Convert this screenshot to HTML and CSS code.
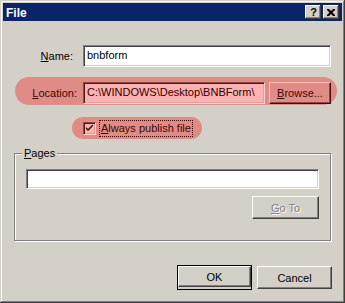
FILE: index.html
```html
<!DOCTYPE html>
<html>
<head>
<meta charset="utf-8">
<title>File</title>
<link rel="stylesheet" href="styles.css">
</head>
<body>
<div class="window">
	<div class="titlebar">
		<span class="title">File</span>
		<div class="caption-btns">
			<div class="cap-btn help">?</div>
			<div class="cap-btn close">
				<svg width="8" height="7" viewBox="0 0 8 7"><path d="M0 0h2l2 2 2-2h2v1l-2.5 2.5 2.5 2.5v1h-2l-2-2-2 2h-2v-1l2.5-2.5-2.5-2.5z" fill="#000"/></svg>
			</div>
		</div>
	</div>

	<div class="content">
		<div class="row name-row">
			<label class="lbl name-lbl"><u>N</u>ame:</label>
			<div class="textbox name-box">bnbform</div>
		</div>

		<div class="row loc-row">
			<label class="lbl loc-lbl"><u>L</u>ocation:</label>
			<div class="textbox loc-box">C:\WINDOWS\Desktop\BNBForm\</div>
			<div class="btn browse"><u>B</u>rowse...</div>
		</div>

		<div class="check-row">
			<div class="checkbox">
				<svg width="7" height="7" viewBox="0 0 7 7"><path d="M0 2l2 2 5-5v2l-5 5-2-2z" fill="#400000"/></svg>
			</div>
			<span class="check-lbl"><u>A</u>lways publish file</span>
		</div>

		<div class="group">
			<span class="legend"><u>P</u>ages</span>
			<div class="textbox pages-box"></div>
			<div class="group-foot">
				<div class="btn disabled goto"><u>G</u>o To</div>
			</div>
		</div>

		<div class="footer">
			<div class="default"><div class="btn ok">OK</div></div>
			<div class="btn cancel">Cancel</div>
		</div>
	</div>
</div>
</body>
</html>
```

FILE: styles.css
```css
body{
	margin: 0;
	background: #d4d0c8;
	font-family: "Liberation Sans", Arial, sans-serif;
	font-size: 11px;
	color: #000;
}
u{text-decoration: underline; text-underline-offset: 1px;}

.window{
	width: 345px;
	height: 303px;
	box-sizing: border-box;
	padding: 3px;
	background: #d4d0c8;
	box-shadow: inset -1px -1px #404040, inset 1px 1px #d4d0c8, inset -2px -2px #808080, inset 2px 2px #fff;
	display: flex;
	flex-direction: column;
}

/* title bar */
.titlebar{
	height: 18px;
	background: #0a246a;
	display: flex;
	align-items: center;
	justify-content: space-between;
	padding: 0 3px 0 3px;
}
.title{
	color: #fff;
	font-weight: bold;
	font-size: 12px;
	padding-top: 1px;
}
.caption-btns{display: flex; gap: 2px;}
.cap-btn{
	width: 16px;
	height: 14px;
	box-sizing: border-box;
	background: #d4d0c8;
	box-shadow: inset -1px -1px #404040, inset 1px 1px #fff, inset -2px -2px #808080;
	display: flex;
	align-items: center;
	justify-content: center;
	font-weight: bold;
	font-size: 11px;
	line-height: 14px;
}
.help{padding-left: 1px;}

/* form */
.content{
	padding: 24px 11px 0 11px;
	display: flex;
	flex-direction: column;
}
.row{display: flex; align-items: center;}
.lbl{text-align: right; white-space: nowrap;}
.name-lbl{width: 59px; margin-right: 10px;}

.textbox{
	box-sizing: border-box;
	height: 22px;
	background: #fff;
	border: 1px solid;
	border-color: #808080 #fff #fff #808080;
	box-shadow: inset 1px 1px #404040, inset -1px -1px #d4d0c8;
	padding: 3px 0 0 3px;
	white-space: nowrap;
	overflow: hidden;
}
.name-box{flex: 1;}

.loc-row{
	margin: 10px -6px 0 1px;
	height: 28px;
	box-sizing: border-box;
	padding: 5px 6px 1px 0;
	background: #e08c86;
	border-radius: 14px;
	color: #3a0808;
}
.loc-lbl{width: 62px; margin-right: 6px;}
.loc-box{
	width: 182px;
	background: #ffb0b0;
	border-color: #8a4a48 #ffd0d0 #ffd0d0 #8a4a48;
	box-shadow: inset 1px 1px #4a1a18, inset -1px -1px #e0a09a;
	color: #300000;
}

.btn{
	box-sizing: border-box;
	height: 23px;
	background: #d4d0c8;
	border: 1px solid;
	border-color: #fff #404040 #404040 #fff;
	box-shadow: inset -1px -1px #808080;
	display: flex;
	align-items: center;
	justify-content: center;
}
.browse{
	width: 62px;
	height: 22px;
	margin-left: 4px;
	background: #e08c86;
	border-color: #ffc0bc #401010 #401010 #ffc0bc;
	box-shadow: inset -1px -1px #8a4a48;
}

.check-row{
	margin: 12px 0 0 58px;
	width: 130px;
	height: 22px;
	box-sizing: border-box;
	padding-left: 11px;
	background: #e08c86;
	border-radius: 11px;
	display: flex;
	align-items: center;
	color: #3a0808;
}
.checkbox{
	width: 13px;
	height: 13px;
	box-sizing: border-box;
	background: #ffb0b0;
	border: 1px solid;
	border-color: #8a4a48 #ffd0d0 #ffd0d0 #8a4a48;
	box-shadow: inset 1px 1px #4a1a18, inset -1px -1px #e0a09a;
	display: flex;
	align-items: center;
	justify-content: center;
}
.check-lbl{
	margin-left: 4px;
	padding: 1px 1px 2px 1px;
	outline: 1px dotted #3a0808;
	line-height: 12px;
}

/* group box */
.group{
	margin-top: 14px;
	height: 88px;
	box-sizing: border-box;
	border: 1px solid #808080;
	box-shadow: inset 1px 1px #fff, 1px 1px #fff;
	padding: 0 11px 0 11px;
	display: flex;
	flex-direction: column;
}
.legend{
	align-self: flex-start;
	margin: -7px 0 0 -4px;
	padding: 0 2px 0 2px;
	background: #d4d0c8;
	line-height: 13px;
}
.pages-box{
	margin-top: 9px;
	height: 20px;
}
.group-foot{display: flex; justify-content: flex-end; margin-top: 7px;}
.goto{width: 67px;}
.disabled{
	color: #808080;
	text-shadow: 1px 1px #fff;
}

/* bottom buttons */
.footer{
	margin-top: 25px;
	display: flex;
	justify-content: flex-end;
	gap: 5px;
	margin-right: -1px;
}
.default{border: 1px solid #000; margin-top: -1px; height: 23px;}
.ok{width: 73px; height: 21px;}
.cancel{width: 75px;}
```
